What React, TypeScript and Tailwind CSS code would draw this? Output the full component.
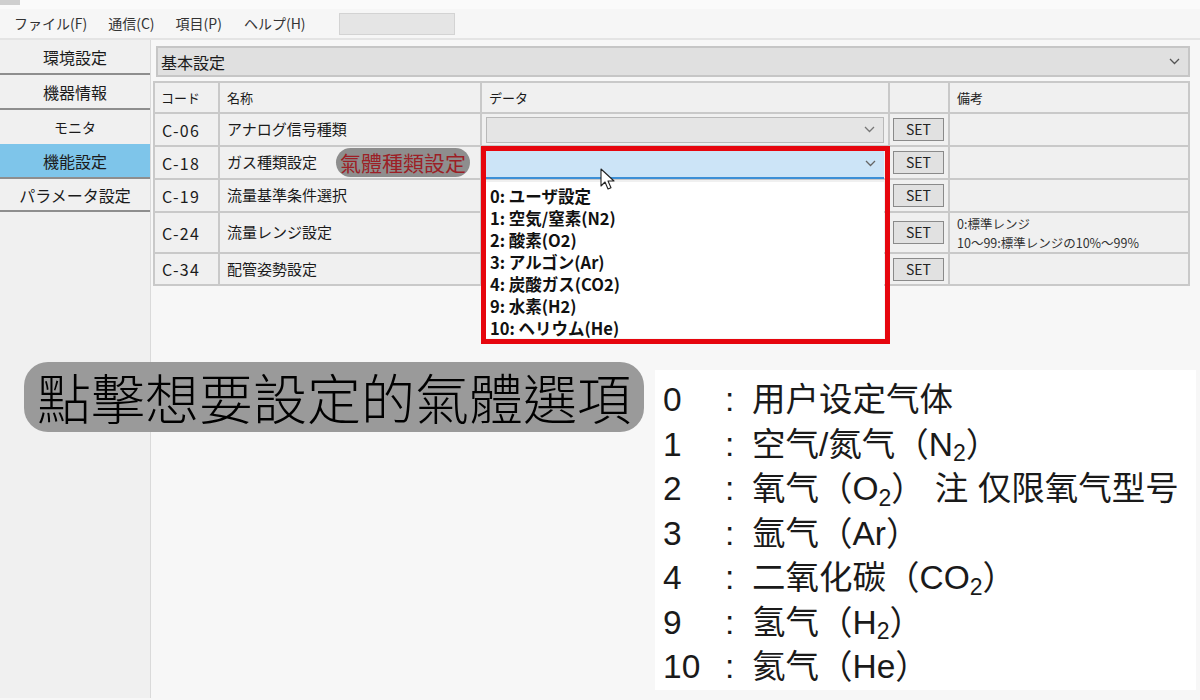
import React from "react";

const rows = [
  { code: "C-06", name: "アナログ信号種類", h: "h-[31px]", combo: "normal" as const, note: "" },
  { code: "C-18", name: "ガス種類設定", h: "h-[31px]", combo: "active" as const, note: "" },
  { code: "C-19", name: "流量基準条件選択", h: "h-[31px]", combo: "none" as const, note: "" },
  { code: "C-24", name: "流量レンジ設定", h: "h-[39px]", combo: "none" as const, note: "remark" },
  { code: "C-34", name: "配管姿勢設定", h: "h-[30px]", combo: "none" as const, note: "" },
];

const Chevron = ({ color = "#555" }: { color?: string }) => (
  <svg width="11" height="7" viewBox="0 0 11 7" fill="none">
    <path d="M1 1l4.5 4.5L10 1" stroke={color} strokeWidth="1.3" />
  </svg>
);

const options = [
  "0: ユーザ設定",
  "1: 空気/窒素(N2)",
  "2: 酸素(O2)",
  "3: アルゴン(Ar)",
  "4: 炭酸ガス(CO2)",
  "9: 水素(H2)",
  "10: ヘリウム(He)",
];

const legend: { n: string; t: React.ReactNode }[] = [
  { n: "0", t: <>用户设定气体</> },
  { n: "1", t: <>空气/氮气（N<sub className="text-[23px]">2</sub>）</> },
  { n: "2", t: <>氧气（O<sub className="text-[23px]">2</sub>）<span className="ml-[10px]">注 仅限氧气型号</span></> },
  { n: "3", t: <>氩气（Ar）</> },
  { n: "4", t: <>二氧化碳（CO<sub className="text-[23px]">2</sub>）</> },
  { n: "9", t: <>氢气（H<sub className="text-[23px]">2</sub>）</> },
  { n: "10", t: <>氦气（He）</> },
];

export default function App() {
  return (
    <div className="relative w-[1200px] h-[700px] overflow-hidden bg-[#f7f7f7] text-[#1b1b1b] font-['Noto_Sans_CJK_JP',sans-serif]">
      {/* title remnant */}
      <div className="h-[9px] bg-[#fafafa] flex">
        <div className="w-[20px] h-[5px] bg-[#cfcfcf]" />
      </div>
      {/* menu bar */}
      <div className="h-[31px] flex items-center bg-[#f6f6f6] border-b-2 border-[#e4e4e4] text-[14px] text-[#333]">
        <span className="ml-[14px]">ファイル(F)</span>
        <span className="ml-[21px]">通信(C)</span>
        <span className="ml-[21px]">項目(P)</span>
        <span className="ml-[22px]">ヘルプ(H)</span>
        <div className="ml-[33px] w-[116px] h-[22px] bg-[#e5e5e5] border border-[#d3d3d3]" />
      </div>

      <div className="flex h-[658px]">
        {/* sidebar */}
        <div className="w-[151px] shrink-0 bg-[#f0f0f0] border-r border-[#dadada] flex flex-col text-[16px]">
          <div className="h-[35px] flex items-center justify-center border-b-2 border-[#8e8e8e] bg-[#f0f0f0]">環境設定</div>
          <div className="h-[35px] flex items-center justify-center border-b-2 border-[#8e8e8e] bg-[#f0f0f0]">機器情報</div>
          <div className="h-[34px] flex items-center justify-center text-[14px] bg-[#f0f0f0]">モニタ</div>
          <div className="h-[35px] flex items-center justify-center border-b-2 border-[#8e8e8e] bg-[#7ec5ea]">機能設定</div>
          <div className="h-[33px] flex items-center justify-center border-b-2 border-[#8e8e8e] bg-[#f0f0f0]">パラメータ設定</div>
        </div>

        {/* main */}
        <div className="flex-1 pl-[2px] pt-[6px]">
          <div className="ml-[3px] w-[1034px] h-[31px] flex items-center justify-between bg-[#e0e0e0] border-2 border-[#c6c6c6] pl-[3px] pr-[8px] text-[16px]">
            <span>基本設定</span>
            <Chevron />
          </div>

          <div className="mt-[4px] w-[1037px] grid grid-cols-[63px_260px_406px_58px_238px] gap-[2px] bg-[#c9c9c9] border-2 border-[#c9c9c9] text-[15px]">
            {/* header */}
            <div className="h-[29px] bg-[#f0f0f0] flex items-center pl-[6px] text-[13px]">コード</div>
            <div className="h-[29px] bg-[#f0f0f0] flex items-center pl-[7px] text-[13px]">名称</div>
            <div className="h-[29px] bg-[#f0f0f0] flex items-center pl-[7px] text-[13px]">データ</div>
            <div className="h-[29px] bg-[#f0f0f0]" />
            <div className="h-[29px] bg-[#f0f0f0] flex items-center pl-[7px] text-[13px]">備考</div>

            {rows.map((r) => (
              <React.Fragment key={r.code}>
                <div className={`${r.h} bg-[#f0f0f0] flex items-center pl-[7px] text-[16px] tracking-[0.08em]`}>{r.code}</div>
                <div className={`${r.h} bg-[#f0f0f0] flex items-center pl-[7px]`}>
                  <span>{r.name}</span>
                  {r.combo === "active" && (
                    <span className="ml-[19px] h-[29px] px-[4px] flex items-center rounded-full bg-[#8e8e8e] text-[#9c1f26] text-[21px] leading-none font-['Noto_Sans_CJK_TC',sans-serif]">
                      氣體種類設定
                    </span>
                  )}
                </div>
                <div className={`${r.h} bg-[#f0f0f0] flex items-center px-[4px]`}>
                  {r.combo === "normal" && (
                    <div className="w-full h-[26px] bg-[#e5e5e5] border border-[#b9b9b9] flex items-center justify-end pr-[8px]">
                      <Chevron color="#777" />
                    </div>
                  )}
                  {r.combo === "active" && (
                    <div className="w-full h-[29px] mt-[3px] bg-[#cce4f7] border-b-2 border-[#3c8fd6] flex items-center justify-end pr-[8px]">
                      <Chevron color="#666" />
                    </div>
                  )}
                </div>
                <div className={`${r.h} bg-[#f0f0f0] flex items-center pl-[3px]`}>
                  <div className="w-[51px] h-[23px] bg-[#e1e1e1] border border-[#8a8a8a] flex items-center justify-center text-[14px] text-[#222]">
                    SET
                  </div>
                </div>
                <div className={`${r.h} bg-[#f0f0f0] flex flex-col justify-center pl-[7px] text-[12.5px] leading-[19px] text-[#333]`}>
                  {r.note === "remark" && (
                    <>
                      <span>0:標準レンジ</span>
                      <span>10～99:標準レンジの10%～99%</span>
                    </>
                  )}
                </div>
              </React.Fragment>
            ))}
          </div>
        </div>
      </div>

      {/* dropdown list */}
      <div className="absolute left-[486px] top-[182px] w-[398px] h-[156px] bg-white pt-[3px] pl-[4px] text-[16.5px] font-bold leading-[22px] text-[#111]">
        {options.map((o) => (
          <div key={o}>{o}</div>
        ))}
      </div>

      {/* red highlight frame */}
      <div className="absolute left-[481px] top-[146px] w-[409px] h-[198px] border-[5px] border-[#e6060e]" />

      {/* mouse cursor */}
      <svg className="absolute left-[600px] top-[168px]" width="16" height="23" viewBox="0 0 16 23">
        <path d="M1 1v17l4-4 3 7 3-1.3-3-6.7h6z" fill="#fff" stroke="#222" strokeWidth="1.1" strokeLinejoin="round" />
      </svg>

      {/* big annotation pill */}
      <div className="absolute left-[24px] top-[362px] w-[620px] h-[70px] rounded-[24px] bg-[#9a9a9a] flex items-center justify-center text-black text-[54px] leading-none font-light font-['Noto_Sans_CJK_TC',sans-serif]">
        點擊想要設定的氣體選項
      </div>

      {/* legend box */}
      <div className="absolute left-[655px] top-[370px] w-[541px] h-[320px] bg-white pt-[8px] pl-[8px] text-[33.5px] leading-[44.5px] text-[#1a1a1a] font-['Liberation_Sans','Noto_Sans_CJK_SC',sans-serif]">
        {legend.map((l) => (
          <div key={l.n} className="grid grid-cols-[62px_27px_1fr] whitespace-nowrap">
            <span>{l.n}</span>
            <span>:</span>
            <span>{l.t}</span>
          </div>
        ))}
      </div>
    </div>
  );
}
